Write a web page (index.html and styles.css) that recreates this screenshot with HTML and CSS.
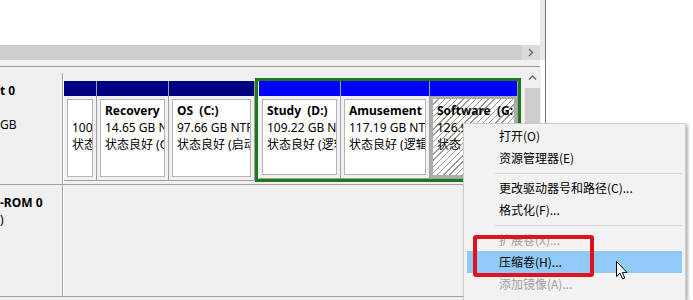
FILE: index.html
```html
<!DOCTYPE html>
<html>
<head>
	<title>磁盘管理</title>
	<meta charset="utf-8">
	<link rel="stylesheet" href="styles.css">
</head>
<body>
	<div class="window">
		<div class="list-pane">
			<div class="list-area"></div>
			<div class="hscroll">
				<div class="hthumb"></div>
				<div class="harrow">
					<svg width="8" height="9" viewBox="0 0 8 9"><polyline points="2,1 5.5,4.5 2,8" fill="none" stroke="#606060" stroke-width="1.3"/></svg>
				</div>
			</div>
		</div>
		<div class="splitter"></div>
		<div class="graph-pane">
			<div class="disks">
				<div class="disk-row">
					<div class="disk-label">
						<div class="dl-name">t 0</div>
						<div>&nbsp;</div>
						<div>GB</div>
					</div>
					<div class="parts">
						<div class="part" style="width:33px">
							<div class="phead"></div>
							<div class="pbody"><div class="pbox">
								<div>&nbsp;</div>
								<div>100 MB</div>
								<div>状态良好 (EFI 系统分区)</div>
							</div></div>
						</div>
						<div class="part" style="width:72px">
							<div class="phead"></div>
							<div class="pbody"><div class="pbox">
								<div class="pname">Recovery</div>
								<div>14.65 GB NTFS</div>
								<div>状态良好 (OEM 分区)</div>
							</div></div>
						</div>
						<div class="part" style="width:86px">
							<div class="phead"></div>
							<div class="pbody"><div class="pbox">
								<div class="pname">OS&nbsp;&nbsp;(C:)</div>
								<div>97.66 GB NTFS</div>
								<div>状态良好 (启动, 页面文件, 故障转储, 主分区)</div>
							</div></div>
						</div>
						<div class="ext">
							<div class="part" style="width:82px">
								<div class="phead"></div>
								<div class="pbody"><div class="pbox">
									<div class="pname">Study&nbsp;&nbsp;(D:)</div>
									<div>109.22 GB NTFS</div>
									<div>状态良好 (逻辑驱动器)</div>
								</div></div>
							</div>
							<div class="part" style="width:89px">
								<div class="phead"></div>
								<div class="pbody"><div class="pbox">
									<div class="pname">Amusement&nbsp;&nbsp;(E:)</div>
									<div>117.19 GB NTFS</div>
									<div>状态良好 (逻辑驱动器)</div>
								</div></div>
							</div>
							<div class="part sel" style="width:88px">
								<div class="phead"></div>
								<div class="pbody"><div class="pbox">
									<div class="pname">Software&nbsp;&nbsp;(G:)</div>
									<div>126.95 GB NTFS</div>
									<div>状态良好 (逻辑驱动器)</div>
								</div></div>
							</div>
						</div>
					</div>
				</div>
				<div class="disk-row">
					<div class="disk-label">
						<div class="dl-name">-ROM 0</div>
						<div>)</div>
					</div>
					<div class="parts"></div>
				</div>
			</div>
			<div class="vscroll">
				<div class="varrow">
					<svg width="9" height="8" viewBox="0 0 9 8"><polyline points="1,5.5 4.5,2 8,5.5" fill="none" stroke="#606060" stroke-width="1.3"/></svg>
				</div>
				<div class="vthumb"></div>
			</div>
		</div>
	</div>

	<div class="menu">
		<div class="mi">打开(O)</div>
		<div class="mi">资源管理器(E)</div>
		<div class="sep"></div>
		<div class="mi">更改驱动器号和路径(C)...</div>
		<div class="mi">格式化(F)...</div>
		<div class="sep"></div>
		<div class="mi off">扩展卷(X)...</div>
		<div class="mi hot">压缩卷(H)...</div>
		<div class="mi off">添加镜像(A)...</div>
		<div class="mi">删除卷(D)...</div>
	</div>

	<div class="mark"></div>

	<svg class="cursor" width="14" height="21" viewBox="0 0 14 21">
		<path d="M1.5 1.5 L1.5 16.5 L5 13.2 L7.6 19 L9.8 18 L7.3 12.4 L12 12.4 Z" fill="#ffffff" stroke="#000000" stroke-width="1" stroke-linejoin="round"/>
	</svg>
</body>
</html>
```

FILE: styles.css
```css
* {
	box-sizing: border-box;
}

body {
	margin: 0;
	width: 693px;
	height: 300px;
	overflow: hidden;
	position: relative;
	background-color: #ffffff;
	color: #000000;
	font-family: "Noto Sans", "Noto Sans CJK SC", sans-serif;
	font-size: 12px;
}

.window {
	width: 546px;
	height: 300px;
	border-right: 1px solid #7a7a7a;
	display: flex;
	flex-direction: column;
}

.list-pane {
	height: 60px;
	display: flex;
	flex-direction: column;
	border-right: 5px solid #e8e8e8;
}

.list-area {
	flex: 1;
	background-color: #ffffff;
}

.hscroll {
	height: 15px;
	display: flex;
	background-color: #dadada;
}

.hthumb {
	flex: 1;
	background-color: #cdcdcd;
}

.harrow {
	width: 18px;
	display: flex;
	align-items: center;
	justify-content: center;
}

.splitter {
	height: 7px;
	background-color: #f0f0f0;
	border-bottom: 1px solid #999999;
	margin-right: 5px;
}

.graph-pane {
	flex: 1;
	display: flex;
	background-color: #f0f0f0;
	border-right: 4px solid #ffffff;
}

.disks {
	flex: 1;
	padding-top: 6px;
}

.disk-row {
	display: flex;
	height: 112px;
	border-bottom: 1px solid #a0a0a0;
}

.disk-label {
	width: 63px;
	border-right: 1px solid #a0a0a0;
	padding-top: 9px;
	line-height: 17px;
	white-space: nowrap;
	overflow: hidden;
}

.dl-name {
	font-weight: bold;
}

.parts {
	flex: 1;
	display: flex;
	align-items: flex-start;
	border-left: 1px solid #ffffff;
	padding: 5px 3px 0 0;
}

.part {
	display: flex;
	flex-direction: column;
	height: 100px;
	margin-top: 3px;
	border-right: 1px solid #a0a0a0;
	border-bottom: 1px solid #a0a0a0;
}

.phead {
	height: 15px;
	background-color: #000080;
}

.pbody {
	flex: 1;
	display: flex;
	padding: 3px;
	min-height: 0;
}

.pbox {
	flex: 1;
	min-width: 0;
	background-color: #ffffff;
	border: 1px solid #b4b4b4;
	padding: 2px 0 0 4px;
	line-height: 17px;
	white-space: nowrap;
	overflow: hidden;
}

.pname {
	font-weight: bold;
}

.ext {
	display: flex;
	height: 104px;
	border: 3px solid #1e781e;
	padding-left: 1px;
}

.ext .part {
	height: auto;
	margin-top: 0;
}

.ext .phead {
	background-color: #0000ff;
}

.part.sel .pbody {
	background-color: #acacac;
}

.part.sel .pbox {
	border: none;
	padding: 3px 0 0 4px;
	background: repeating-linear-gradient(135deg, #ffffff 0 3.4px, #9a9a9a 3.4px 4.4px);
}

.vscroll {
	width: 17px;
	display: flex;
	flex-direction: column;
}

.varrow {
	height: 21px;
	display: flex;
	align-items: center;
	justify-content: center;
}

.vthumb {
	flex: 1;
	margin: 0 1px;
	background-color: #cdcdcd;
}

.menu {
	position: absolute;
	left: 463px;
	top: 123px;
	width: 223px;
	height: 177px;
	overflow: hidden;
	padding: 1px 3px 0;
	background-color: #f2f2f2;
	border: 1px solid #cccccc;
	border-bottom: none;
	box-shadow: 2px 2px 3px rgba(0, 0, 0, 0.3);
	font-family: "Noto Sans CJK SC", sans-serif;
}

.mi {
	height: 22px;
	line-height: 22px;
	padding-left: 32px;
	white-space: nowrap;
}

.mi.off {
	color: #a0a0a0;
}

.mi.hot {
	background-color: #91c9f7;
}

.sep {
	height: 1px;
	margin: 4px 0 3px 28px;
	background-color: #d7d7d7;
}

.mark {
	position: absolute;
	left: 473px;
	top: 235px;
	width: 121px;
	height: 42px;
	border: 4px solid #e0121c;
	border-radius: 3px;
}

.cursor {
	position: absolute;
	left: 615px;
	top: 260px;
}
```
